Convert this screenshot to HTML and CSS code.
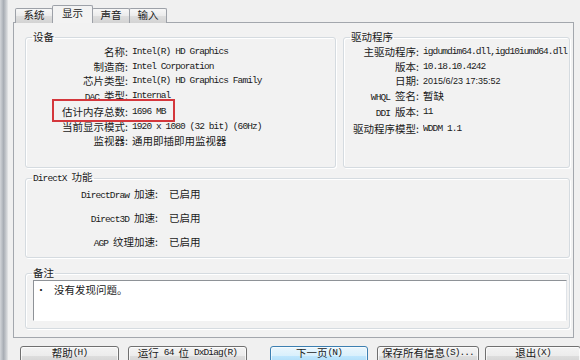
FILE: index.html
```html
<!DOCTYPE html>
<html lang="zh-CN">
<head>
<meta charset="utf-8">
<title>DirectX 诊断工具</title>
<link rel="stylesheet" href="styles.css">
</head>
<body>
<div class="window">
  <div class="frame"></div>
  <div class="main">
    <div class="tabs">
      <div class="tab t1">系统</div>
      <div class="tab t2 active">显示</div>
      <div class="tab t3">声音</div>
      <div class="tab t4">输入</div>
    </div>
    <div class="panel">
      <div class="toprow">
        <fieldset class="group device">
          <legend>设备</legend>
          <div class="kv dev">
            <span class="k">名称:</span><span class="v mono">Intel(R) HD Graphics</span>
            <span class="k">制造商:</span><span class="v mono">Intel Corporation</span>
            <span class="k">芯片类型:</span><span class="v mono">Intel(R) HD Graphics Family</span>
            <span class="k"><span class="mono pre">DAC</span>类型:</span><span class="v mono">Internal</span>
            <span class="k">估计内存总数:</span><span class="v mono">1696 MB</span>
            <span class="k">当前显示模式:</span><span class="v mono">1920 x 1080 (32 bit) (60Hz)</span>
            <span class="k">监视器:</span><span class="v">通用即插即用监视器</span>
            <div class="highlight"></div>
          </div>
        </fieldset>
        <fieldset class="group driver">
          <legend>驱动程序</legend>
          <div class="kv drv">
            <span class="k">主驱动程序:</span><span class="v mono">igdumdim64.dll,igd10iumd64.dll</span>
            <span class="k">版本:</span><span class="v mono">10.18.10.4242</span>
            <span class="k">日期:</span><span class="v sans">2015/6/23 17:35:52</span>
            <span class="k"><span class="mono pre">WHQL</span>签名:</span><span class="v">暂缺</span>
            <span class="k"><span class="mono pre">DDI</span>版本:</span><span class="v mono">11</span>
            <span class="k">驱动程序模型:</span><span class="v mono">WDDM 1.1</span>
          </div>
        </fieldset>
      </div>
      <fieldset class="group dx">
        <legend><span class="mono pre">DirectX</span>功能</legend>
        <div class="kv dxkv">
          <span class="k"><span class="mono pre">DirectDraw</span>加速:</span><span class="v">已启用</span>
          <span class="k"><span class="mono pre">Direct3D</span>加速:</span><span class="v">已启用</span>
          <span class="k"><span class="mono pre">AGP</span>纹理加速:</span><span class="v">已启用</span>
        </div>
      </fieldset>
      <fieldset class="group notes">
        <legend>备注</legend>
        <div class="notes-box">
          <span class="bullet">•</span><span class="note-text">没有发现问题。</span>
        </div>
      </fieldset>
    </div>
    <div class="buttons">
      <div class="btn b1">帮助<span class="mono">(H)</span></div>
      <div class="btn b2">运行<span class="mono gap">64</span>位<span class="mono gapl">DxDiag(R)</span></div>
      <div class="btn b3 default">下一页<span class="mono">(N)</span></div>
      <div class="btn b4">保存所有信息<span class="mono">(S)...</span></div>
      <div class="btn b5">退出<span class="mono">(X)</span></div>
    </div>
  </div>
</div>
</body>
</html>
```
FILE: styles.css
```css
* { box-sizing: border-box; }
html, body { margin: 0; padding: 0; }
body {
  width: 580px;
  height: 360px;
  overflow: hidden;
  background: #f0f0f0;
  font-family: "Noto Sans CJK SC", "Liberation Sans", sans-serif;
  font-size: 10.5px;
  color: #1a1a1a;
}
.window { display: flex; height: 360px; }
.frame {
  width: 8px;
  flex: none;
  background: linear-gradient(to right, #d3d6da, #a8adb4 45%, #c7cace 75%, #e6e7e8);
}
.main {
  flex: 1;
  min-width: 0;
  padding: 5px 6px 0 5px;
  display: flex;
  flex-direction: column;
}
.main > * { flex: none; }
.mono {
  font-family: "Liberation Mono", monospace;
  font-size: 9.5px;
  letter-spacing: -0.9px;
}
.mono.pre { margin-right: 5px; }
.mono.gap { margin: 0 5px; }
.mono.gapl { margin-left: 5px; }
.sans {
  font-family: "Liberation Sans", sans-serif;
  font-size: 9px;
}

/* tabs */
.tabs {
  display: flex;
  align-items: flex-end;
  height: 18px;
  margin-left: 2px;
  margin-bottom: -1px;
  position: relative;
  z-index: 1;
}
.tab {
  height: 15px;
  border: 1px solid #9da1a8;
  border-bottom: none;
  border-radius: 2px 2px 0 0;
  background: linear-gradient(#f7f7f7, #ebebeb 50%, #dedede 51%, #d3d3d3);
  display: flex;
  align-items: center;
  justify-content: center;
  line-height: 1;
  padding-bottom: 1px;
}
.tab + .tab { margin-left: -1px; }
.tab.active {
  height: 18px;
  background: #f3f3f3;
  padding: 0 0 3px;
}
.t1 { width: 38px; }
.t2 { width: 41px; }
.t3 { width: 38px; }
.t4 { width: 38px; }

/* panel */
.panel {
  height: 316px;
  border: 1px solid #a3a7ad;
  background: #f2f2f2;
  padding: 8px 3px 0 11px;
  display: flex;
  flex-direction: column;
}
.panel > * { flex: none; }
.toprow { display: flex; gap: 7px; }
.group {
  margin: 0;
  padding: 0;
  min-width: 0;
  border: 1px solid #d5dbe0;
  border-radius: 3px;
  box-shadow: inset 1px 1px 0 #fff, 1px 1px 0 #fff;
}
.group legend {
  margin-left: 6px;
  padding: 0 1px;
  line-height: 12px;
}
.device { width: 311px; height: 137px; position: relative; }
.driver { flex: 1; min-width: 0; height: 137px; }
.dx { height: 87px; margin-top: 3px; }
.notes { height: 62px; margin-top: 9px; }

.kv {
  display: grid;
  column-gap: 4px;
  line-height: 14.5px;
  padding-top: 2px;
  position: relative;
}
.dev { grid-template-columns: 102px auto; }
.drv { grid-template-columns: 75px minmax(0, 1fr); }
.dxkv {
  grid-template-columns: 132px auto;
  column-gap: 11px;
  line-height: 22px;
  padding-top: 0;
  margin-top: -2px;
}
.k { text-align: right; white-space: nowrap; }
.v { white-space: nowrap; overflow: hidden; }

.highlight {
  position: absolute;
  left: 26px;
  top: 56px;
  width: 123px;
  height: 23px;
  border: 2px solid #d4373c;
}

.notes-box {
  height: 41px;
  margin: 1px 2px 0 7px;
  background: #fff;
  border: 1px solid;
  border-color: #8e9297 #dfe3e8 #ffffff #8e9297;
  display: flex;
  align-items: flex-start;
  padding: 3px 0 0 2px;
  line-height: 12px;
}
.bullet { width: 18px; font-size: 10px; line-height: 12px; }

/* buttons */
.buttons { display: flex; margin-top: 8px; margin-left: 7px; }
.btn {
  flex: none;
  height: 20px;
  border: 1px solid #707070;
  border-radius: 3px;
  background: linear-gradient(#f3f3f3, #ececec 48%, #dddddd 52%, #d0d0d0);
  box-shadow: inset 0 0 0 1px rgba(255, 255, 255, 0.7);
  display: flex;
  align-items: flex-start;
  justify-content: center;
  padding-top: 0;
  line-height: 11px;
  white-space: nowrap;
}
.btn.default {
  border-color: #3c7fb1;
  background: linear-gradient(#eaf6fd, #d9f0fc 48%, #bee6fd 52%, #a7d9f5);
  box-shadow: inset 0 0 0 1px rgba(255, 255, 255, 0.6);
}
.b1 { width: 99px; }
.b2 { width: 119px; margin-left: 9px; }
.b3 { width: 98px; margin-left: 23px; }
.b4 { width: 102px; margin-left: 9px; }
.b5 { width: 96px; margin-left: 6px; }
```
